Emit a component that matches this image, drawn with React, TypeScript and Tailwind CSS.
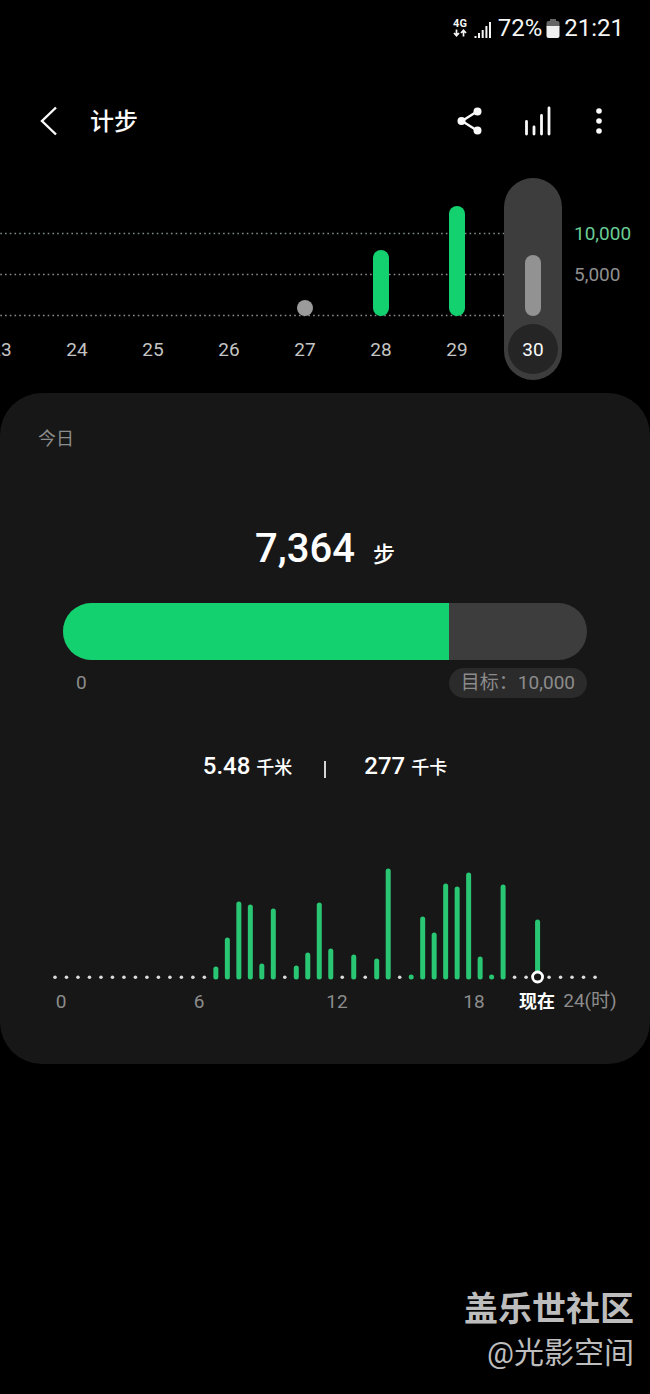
type Day = {
  label: string;
  steps: number;
  reached: boolean;
};

const GOAL = 10000;
const STEPS = 7364;

// chart height of one goal (10,000 steps), in px
const GOAL_HEIGHT = 83;

const days: Day[] = [
  { label: "23", steps: 0, reached: false },
  { label: "24", steps: 0, reached: false },
  { label: "25", steps: 0, reached: false },
  { label: "26", steps: 0, reached: false },
  { label: "27", steps: 600, reached: false },
  { label: "28", steps: 8000, reached: true },
  { label: "29", steps: 13200, reached: true },
  { label: "30", steps: STEPS, reached: false },
];

// one value per half hour, 0 = no steps
const halfHours = [
  0, 0, 0, 0, 0, 0, 0, 0, 0, 0, 0, 0, 0, 0, 13, 42, 78, 75, 16, 71, 0, 14, 27,
  77, 31, 0, 25, 0, 21, 111, 0, 5, 63, 47, 96, 93, 107, 23, 5, 95, 0, 0, 60, 0,
  0, 0, 0, 0,
];
const NOW = 42;
const slotX = (i: number) => 55 + i * 11.49;

const hourLabels = [
  { text: "0", x: 61 },
  { text: "6", x: 199 },
  { text: "12", x: 337 },
  { text: "18", x: 474 },
];

function StatusBar() {
  return (
    <div className="flex h-14 items-center justify-end pr-[26px] text-2xl text-neutral-100">
      <svg
        width="18"
        height="24"
        viewBox="0 0 18 24"
        className="mr-1"
        role="img"
        aria-label="4G"
      >
        <text
          x="8"
          y="11"
          textAnchor="middle"
          fontSize="11"
          fontWeight="700"
          fill="currentColor"
        >
          4G
        </text>
        <path
          d="M4.5 13.5v6M2 17l2.5 2.8L7 17M11.5 20.5v-6M9 17l2.5-2.8L14 17"
          fill="none"
          stroke="currentColor"
          strokeWidth="1.7"
        />
      </svg>
      <svg width="18" height="18" viewBox="0 0 18 18" className="mt-1 mr-1.5">
        <path
          d="M1.5 17v-2M5 17v-5M8.7 17V9M12.4 17V5M16 17V1"
          stroke="currentColor"
          strokeWidth="2"
        />
      </svg>
      <span>72%</span>
      <svg width="14" height="20" viewBox="0 0 14 20" className="mx-1">
        <path
          d="M4 1h6v2h1.5a2 2 0 0 1 2 2v4H.5V5a2 2 0 0 1 2-2H4z"
          fill="#666"
        />
        <path d="M.5 8h13v10a2 2 0 0 1-2 2h-9a2 2 0 0 1-2-2z" fill="#f0f0f0" />
      </svg>
      <span>21:21</span>
    </div>
  );
}

function Header() {
  return (
    <header className="flex h-[122px] items-center pt-2 pr-[39px] pl-9 text-neutral-50">
      <button type="button" aria-label="返回" className="mr-8">
        <svg width="22" height="32" viewBox="0 0 22 32">
          <path
            d="M20 2.5 6 16l14 13.5"
            fill="none"
            stroke="currentColor"
            strokeWidth="2.4"
          />
        </svg>
      </button>
      <h1 className="flex-1 pt-0.5 text-2xl font-medium">计步</h1>
      <button type="button" aria-label="分享" className="mr-10">
        <svg width="28" height="32" viewBox="0 0 28 32">
          <path
            d="M22 6.5 7 16l15 9.5"
            fill="none"
            stroke="currentColor"
            strokeWidth="2.4"
          />
          <circle cx="22.5" cy="6.5" r="4" fill="currentColor" />
          <circle cx="6.5" cy="16" r="4" fill="currentColor" />
          <circle cx="22.5" cy="25.5" r="4" fill="currentColor" />
        </svg>
      </button>
      <button type="button" aria-label="统计" className="mr-9">
        <svg width="28" height="32" viewBox="0 0 28 32">
          <path
            d="M3.5 16.5v12.5M11 22v7M18.5 10.5v18.5M26 3v26"
            stroke="currentColor"
            strokeWidth="2.8"
            strokeLinecap="round"
          />
        </svg>
      </button>
      <button type="button" aria-label="更多">
        <svg width="24" height="32" viewBox="0 0 24 32" fill="currentColor">
          <circle cx="12" cy="6" r="2.8" />
          <circle cx="12" cy="16" r="2.8" />
          <circle cx="12" cy="26" r="2.8" />
        </svg>
      </button>
    </header>
  );
}

function DayColumn({ day, selected }: { day: Day; selected: boolean }) {
  const color = day.reached
    ? "bg-[#13d16f]"
    : selected
      ? "bg-[#929292]"
      : "bg-[#9b9b9b]";

  return (
    <button
      type="button"
      aria-pressed={selected}
      className="flex w-19 shrink-0 flex-col items-center"
    >
      <span
        className={`flex w-[58px] flex-col items-center rounded-full pb-1.5 ${
          selected ? "bg-[#3d3d3d]" : ""
        }`}
      >
        <span className="flex h-[138px] items-end">
          {day.steps > 0 && (
            <span
              className={`min-h-4 w-4 rounded-full ${color}`}
              style={{ height: Math.round((day.steps / GOAL) * GOAL_HEIGHT) }}
            />
          )}
        </span>
        <span
          className={`mt-2 flex size-[50px] items-center justify-center rounded-full pt-0.5 text-[19px] ${
            selected ? "bg-[#252525] text-neutral-50" : "text-[#c4c4c4]"
          }`}
        >
          {day.label}
        </span>
      </span>
    </button>
  );
}

function WeekChart() {
  return (
    <section className="flex h-[215px]">
      <div className="relative flex flex-1 justify-end overflow-hidden">
        <svg className="absolute inset-y-0 left-0 h-full w-[calc(100%-38px)]">
          {[55, 96, 137].map((y) => (
            <line
              key={y}
              x1="0.3"
              x2="100%"
              y1={y + 0.5}
              y2={y + 0.5}
              stroke={y === 55 ? "#789084" : "#8c8c8c"}
              strokeWidth="1.6"
              strokeDasharray="1.6 3.14"
            />
          ))}
        </svg>
        <div className="relative flex items-start">
          {days.map((day) => (
            <DayColumn
              key={day.label}
              day={day}
              selected={day.label === "30"}
            />
          ))}
        </div>
      </div>
      <div className="flex w-[79px] flex-col gap-[17px] pt-11 pl-[3px] text-[19px] leading-6">
        <span className="text-[#69cd95]">10,000</span>
        <span className="text-[#8f8f8f]">5,000</span>
      </div>
    </section>
  );
}

function DayChart() {
  return (
    <svg viewBox="0 0 650 164" className="mt-[71px] w-full">
      {halfHours.map((value, i) =>
        value > 0 ? (
          <line
            key={i}
            x1={slotX(i)}
            x2={slotX(i)}
            y1={125 - value}
            y2={120}
            stroke="#29c773"
            strokeWidth="5"
            strokeLinecap="round"
          />
        ) : (
          <circle key={i} cx={slotX(i)} cy="120.3" r="1.8" fill="#dcdcdc" />
        )
      )}
      <circle
        cx={slotX(NOW)}
        cy="120"
        r="5"
        fill="#171717"
        stroke="#fff"
        strokeWidth="2.8"
      />
      <g fontSize="19" fill="#8c8c8c" textAnchor="middle">
        {hourLabels.map((label) => (
          <text key={label.text} x={label.x} y="151">
            {label.text}
          </text>
        ))}
        <text x="537" y="151" fill="#fff" fontSize="18" fontWeight="700">
          现在
        </text>
        <text x="590" y="150">
          24(时)
        </text>
      </g>
    </svg>
  );
}

function TodayCard() {
  return (
    <section className="rounded-[42px] bg-[#171717] pt-8 pb-[43px]">
      <h2 className="px-[38px] text-lg leading-7 text-[#8c8c8c]">今日</h2>

      <p className="mt-[71px] flex items-baseline justify-center gap-[18px] leading-[50px] font-medium text-white">
        <span className="text-[40px]">7,364</span>
        <span className="text-[22px]">步</span>
      </p>

      <div className="mt-[23px] px-[63px]">
        <div className="h-[57px] overflow-hidden rounded-full bg-[#3d3d3d]">
          <div
            className="h-full bg-[#13d16f]"
            style={{ width: `${(STEPS / GOAL) * 100}%` }}
          />
        </div>
        <div className="mt-2 flex items-center justify-between text-[19px] leading-[30px] text-[#8c8c8c]">
          <span className="pl-[13px]">0</span>
          <span className="rounded-full bg-[#2b2b2b] px-3">目标：10,000</span>
        </div>
      </div>

      <div className="mt-[50px] flex items-center justify-center text-lg leading-9 font-medium text-white">
        <p className="flex items-baseline gap-1.5">
          <span className="text-2xl leading-9">5.48</span>
          <span>千米</span>
        </p>
        <span className="mx-8 mt-1 h-[17px] w-0.5 bg-neutral-300" />
        <p className="flex items-baseline gap-1.5 pl-1.5">
          <span className="text-2xl leading-9">277</span>
          <span>千卡</span>
        </p>
      </div>

      <DayChart />
    </section>
  );
}

export default function App() {
  return (
    <main
      lang="zh-CN"
      className="flex min-h-screen flex-col bg-black font-[Roboto,'Noto_Sans_CJK_SC',sans-serif]"
    >
      <StatusBar />
      <Header />
      <WeekChart />
      <TodayCard />
      <footer className="mt-auto pr-4 pb-5 text-right text-[#bdbdbd]">
        <p className="text-[34px] leading-[46px] font-bold">盖乐世社区</p>
        <p className="text-[30px] leading-[42px]">@光影空间</p>
      </footer>
    </main>
  );
}
